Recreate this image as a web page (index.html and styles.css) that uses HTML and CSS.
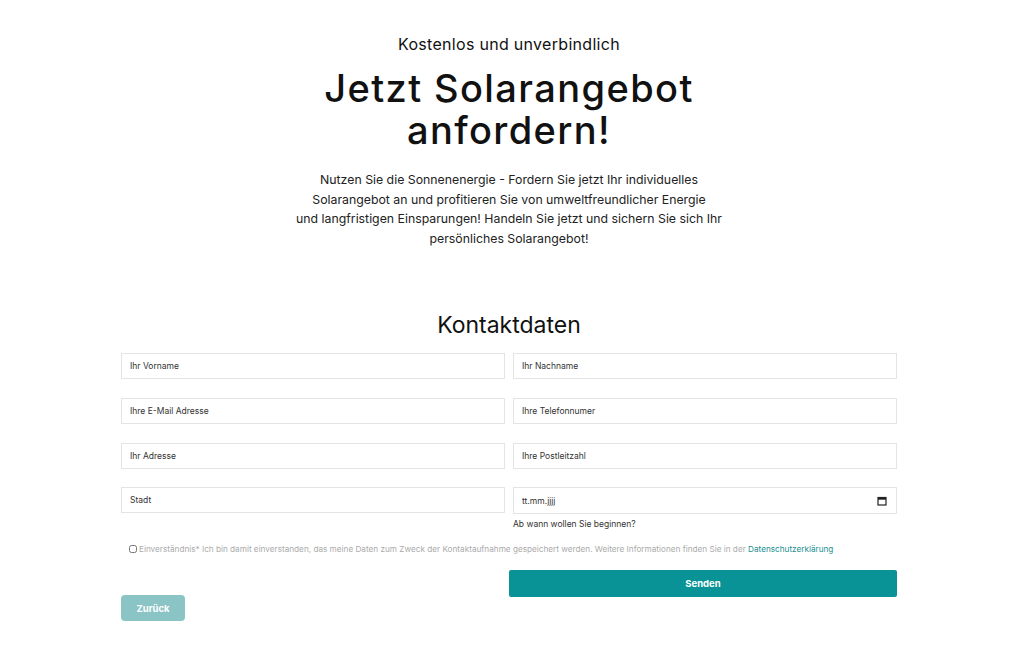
FILE: index.html
```html
<!DOCTYPE html>
<html lang="de">
<head>
    <meta charset="UTF-8">
    <meta name="viewport" content="width=device-width, initial-scale=1.0">
    <title>Solarangebot anfordern</title>
    <link rel="stylesheet" href="styles.css">
</head>
<body>
    <div class="page">
        <section class="intro">
            <h2 class="kicker">Kostenlos und unverbindlich</h2>
            <h1 class="title">Jetzt Solarangebot anfordern!</h1>
            <p class="lead">Nutzen Sie die Sonnenenergie - Fordern Sie jetzt Ihr individuelles<br>
                Solarangebot an und profitieren Sie von umweltfreundlicher Energie<br>
                und langfristigen Einsparungen! Handeln Sie jetzt und sichern Sie sich Ihr<br>
                persönliches Solarangebot!</p>
        </section>

        <form class="contact-form" onsubmit="return false">
            <h2 class="form-title">Kontaktdaten</h2>

            <div class="field-grid">
                <input type="text" class="field" placeholder="Ihr Vorname">
                <input type="text" class="field" placeholder="Ihr Nachname">
                <input type="email" class="field" placeholder="Ihre E-Mail Adresse">
                <input type="tel" class="field" placeholder="Ihre Telefonnumer">
                <input type="text" class="field" placeholder="Ihr Adresse">
                <input type="text" class="field" placeholder="Ihre Postleitzahl">
                <input type="text" class="field" placeholder="Stadt">
                <div class="date-group">
                    <label class="field date-field">
                        <input type="text" class="date-input" placeholder="tt.mm.jjjj">
                        <svg class="date-icon" width="10" height="10" viewBox="0 0 10 10" aria-hidden="true">
                            <rect x="1" y="1.5" width="8" height="7.5" fill="none" stroke="#222" stroke-width="1.2"/>
                            <rect x="1" y="1.5" width="8" height="2.2" fill="#222"/>
                        </svg>
                    </label>
                    <span class="field-hint">Ab wann wollen Sie beginnen?</span>
                </div>
            </div>

            <label class="consent">
                <input type="checkbox" class="consent-box">
                <span>Einverständnis* Ich bin damit einverstanden, das meine Daten zum Zweck der Kontaktaufnahme gespeichert werden. Weitere Informationen finden Sie in der <a href="#" class="consent-link">Datenschutzerklärung</a></span>
            </label>

            <div class="actions">
                <button type="button" class="btn btn-back">Zurück</button>
                <button type="submit" class="btn btn-send">Senden</button>
            </div>
        </form>
    </div>
</body>
</html>
```

FILE: styles.css
```css
body {
    margin: 0;
    padding: 0;
    font-family: 'Inter', 'Lato', sans-serif;
    color: #111111;
    background-color: white;
}

.page {
    max-width: 776px;
    margin: 0 auto;
    padding: 33px 6px 60px 0;
}

/* Intro */
.intro {
    text-align: center;
}

.kicker {
    margin: 0;
    font-size: 16px;
    font-weight: 400;
    line-height: 22px;
    letter-spacing: 0.3px;
}

.title {
    margin: 12px auto 0;
    max-width: 460px;
    font-size: 38px;
    font-weight: 500;
    line-height: 42px;
    letter-spacing: 1.4px;
}

.lead {
    margin: 19px auto 0;
    max-width: 460px;
    font-size: 12.3px;
    line-height: 19.6px;
    color: #222222;
}

/* Form */
.contact-form {
    margin-top: 62px;
}

.form-title {
    margin: 0 0 13px;
    text-align: center;
    font-size: 23px;
    font-weight: 400;
    line-height: 30px;
}

.field-grid {
    display: grid;
    grid-template-columns: 1fr 1fr;
    column-gap: 8px;
    row-gap: 18.6px;
}

.field {
    box-sizing: border-box;
    height: 26px;
    width: 100%;
    margin: 0;
    padding: 0 8px;
    border: 1px solid #e4e4e4;
    border-radius: 0;
    font-family: inherit;
    font-size: 8.5px;
    color: #333333;
    background: white;
    outline: none;
}

.field::placeholder {
    color: #333333;
}

.date-group {
    display: flex;
    flex-direction: column;
}

.date-field {
    display: flex;
    align-items: center;
    height: 27px;
}

.date-input {
    flex-grow: 1;
    border: none;
    padding: 0;
    font-family: inherit;
    font-size: 8.5px;
    outline: none;
}

.date-input::placeholder {
    color: #333333;
}

.date-icon {
    margin-right: 1px;
}

.field-hint {
    margin-top: 5px;
    font-size: 8.5px;
    color: #333333;
}

.consent {
    display: flex;
    align-items: center;
    gap: 2px;
    margin: 15px 0 0 8px;
    font-size: 8.2px;
    color: #ababab;
}

.consent-box {
    width: 8px;
    height: 8px;
    margin: 0;
}

.consent-link {
    color: #1b8f92;
    text-decoration: none;
}

.actions {
    display: flex;
    justify-content: space-between;
    align-items: flex-start;
    margin-top: 16px;
}

.btn {
    border: none;
    color: white;
    font-family: inherit;
    font-size: 9.5px;
    font-weight: 700;
    cursor: pointer;
}

.btn-back {
    width: 64px;
    height: 26px;
    margin-top: 25px;
    border-radius: 4px;
    background-color: #8ac4c4;
}

.btn-send {
    width: 388px;
    height: 27px;
    border-radius: 2px;
    background-color: #0a9396;
}
```
